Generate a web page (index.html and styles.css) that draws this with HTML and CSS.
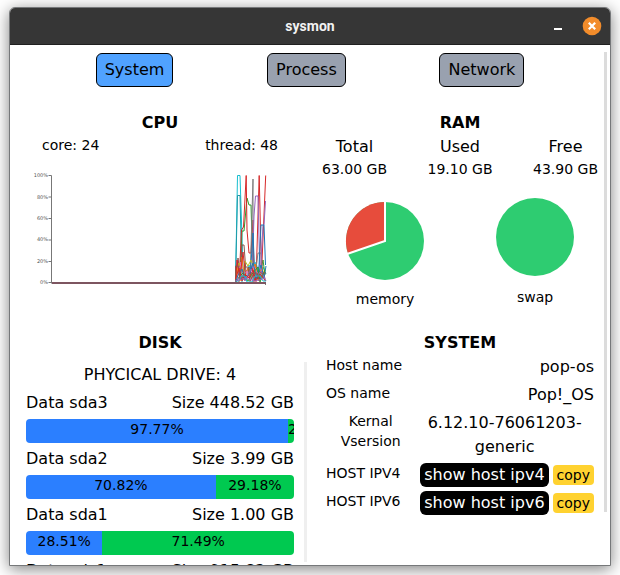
FILE: index.html
```html
<!DOCTYPE html>
<html lang="en">
<head>
<meta charset="utf-8">
<title>sysmon</title>
<link rel="stylesheet" href="styles.css">
</head>
<body>
<div class="window">
  <header class="titlebar">
    <h1 class="titlebar-name">sysmon</h1>
    <div class="titlebar-controls">
      <button class="win-btn" type="button" aria-label="Minimize"><svg width="20" height="20" viewBox="0 0 20 20"><rect x="6" y="12" width="8" height="2" fill="#fff"/></svg></button>
      <button class="win-btn" type="button" aria-label="Close"><svg width="20" height="20" viewBox="0 0 20 20"><circle cx="10" cy="10" r="9.3" fill="#f28c2b"/><path d="M6.8 6.8l6.4 6.4M13.2 6.800l-6.400 6.400" stroke="#fff" stroke-width="2.2"/></svg></button>
    </div>
  </header>
  <main class="content">
    <nav class="tabs">
      <button class="tab tab-active" type="button">System</button>
      <button class="tab" type="button">Process</button>
      <button class="tab" type="button">Network</button>
    </nav>
    <div class="panels">
      <section class="panel">
        <h2 class="panel-title">CPU</h2>
        <div class="cpu-info"><span>core: 24</span><span>thread: 48</span></div>
        <svg class="cpu-chart" viewBox="0 0 268 120" role="img" aria-label="CPU usage">
          <g class="axis-labels">
            <text x="22" y="7">100%</text><text x="22" y="29">80%</text><text x="22" y="50">60%</text><text x="22" y="71">40%</text><text x="22" y="93">20%</text><text x="22" y="114">0%</text>
          </g>
          <path class="axis" d="M22.500 5.500h3v108M22.500 27h3M22.500 48.500h3M22.500 70h3M22.500 91.500h3M22.500 112.500h3M239.500 113v2"/>
          <g class="lines">
            <path stroke="#17becf" d="M209.500 112L211.500 5.500H214L217 98L220 110L223 95L226 108L230 92L234 110L237 97L240 104"/>
            <path stroke="#1f9aa8" d="M209.500 112L211.500 25.500H214L216 112"/>
            <path stroke="#2ca02c" d="M214 106L216 61H218L221 28L223 35H225L227 104L230 94L233 109L237 90L239 105"/>
            <path stroke="#d62728" d="M213 112L215.500 60L217.500 57L220.200 5.500L221 60L223 83H225L227 50L228 112M230 112L233.200 5.500L235.500 103L239.700 5.500"/>
            <path stroke="#8c564b" d="M210 110L212 88L214 104L216 75H218L220 102L223 97L224 104L227 92L230 110"/>
            <path stroke="#7f7f7f" d="M224 112L227 9V112M229 106L232 83L235 83L237 109"/>
            <path stroke="#9467bd" d="M226 110L228 46L229.500 26H232L234 109L237 55H238L239.500 31"/>
            <path stroke="#1f77b4" d="M224 109L227 63L229 111L233 96L235 55H238L239.500 95"/>
            <path stroke="#bcbd22" d="M210 110L213 93L217 102L219 91L222 96L225 90L228 98L231 110L236 99L239 109"/>
            <path stroke="#ff7f0e" d="M209.500 112L212 97L214 111L216 87L218 110L222 98L225 109L229 94L232 108L236 97L239 110"/>
            <path stroke="#e377c2" d="M209.500 112L213 102L215 92L218 109L221 101L224 110L228 96L231 104L235 98L239 111"/>
            <path stroke="#d62728" d="M209.500 112L211 90L214 108L217 82L220 110L226 98L229 111L233 101L239 106"/>
            <path stroke="#1f77b4" d="M209.500 113L212 105L216 99L219 110L224 102L227 93L231 109L235 95L238 108L240 96"/>
            <path stroke="#2ca02c" d="M209.500 113L213 107L217 103L222 111L226 104L232 97L234 112L239 100"/>
            <path stroke="#9467bd" d="M209.500 112L215 105L219 111L225 99L230 107L235 101L240 111"/>
            <path stroke="#8c564b" d="M209.500 112V96H212L214 109H216L219 97H222L224 111L228 103H231L233 111L237 103H240"/>
            <path stroke="#d62728" d="M209.500 109L213 98L216 111L219 104L223 108L227 100L230 111L234 104L239.500 111"/>
            <path stroke="#17becf" d="M209.500 111H213L215 106H219L221 112H226L229 106H234L237 111H240"/>
            <path stroke="#9467bd" d="M209.500 111L219 108L229 111L239.500 108"/>
          </g>
          <path class="baseline" d="M26 113H240"/>
        </svg>
      </section>
      <section class="panel">
        <h2 class="panel-title">RAM</h2>
        <dl class="ram-info">
          <div class="ram-item"><dt>Total</dt><dd>63.00 GB</dd></div>
          <div class="ram-item"><dt>Used</dt><dd>19.10 GB</dd></div>
          <div class="ram-item"><dt>Free</dt><dd>43.90 GB</dd></div>
        </dl>
        <div class="pies">
          <figure class="pie">
            <svg width="80" height="88" viewBox="0 0 80 88"><circle cx="40" cy="44" r="39" fill="#2ecc71"/><path d="M40 44V5A39 39 0 0 0 3 56.500Z" fill="#e74c3c"/><path d="M40 4V44L2 57" fill="none" stroke="#fff" stroke-width="2"/></svg>
            <figcaption>memory</figcaption>
          </figure>
          <figure class="pie">
            <svg width="80" height="86" viewBox="0 0 80 86"><circle cx="40" cy="40" r="39" fill="#2ecc71"/></svg>
            <figcaption>swap</figcaption>
          </figure>
        </div>
      </section>
      <section class="panel disk-panel">
        <h2 class="panel-title">DISK</h2>
        <div class="disk-list">
          <p class="disk-count">PHYCICAL DRIVE: 4</p>
          <div class="disk-head"><span>Data sda3</span><span>Size 448.52 GB</span></div>
          <div class="bar"><span class="used" style="width:97.77%">97.77%</span><span class="free">2.23%</span></div>
          <div class="disk-head"><span>Data sda2</span><span>Size 3.99 GB</span></div>
          <div class="bar"><span class="used" style="width:70.82%">70.82%</span><span class="free">29.18%</span></div>
          <div class="disk-head"><span>Data sda1</span><span>Size 1.00 GB</span></div>
          <div class="bar"><span class="used" style="width:28.51%">28.51%</span><span class="free">71.49%</span></div>
          <div class="disk-head"><span>Data sdc1</span><span>Size 915.82 GB</span></div>
        </div>
        <div class="thumb disk-thumb"></div>
      </section>
      <section class="panel">
        <h2 class="panel-title">SYSTEM</h2>
        <dl class="system-info">
          <div class="row"><dt>Host name</dt><dd>pop-os</dd></div>
          <div class="row"><dt>OS name</dt><dd>Pop!_OS</dd></div>
          <div class="row row-wrapped"><dt>Kernal Vsersion</dt><dd>6.12.10-76061203-generic</dd></div>
          <div class="row"><dt>HOST IPV4</dt><dd class="actions"><button class="show" type="button">show host ipv4</button><button class="copy" type="button">copy</button></dd></div>
          <div class="row"><dt>HOST IPV6</dt><dd class="actions"><button class="show" type="button">show host ipv6</button><button class="copy" type="button">copy</button></dd></div>
        </dl>
      </section>
    </div>
    <div class="thumb page-thumb"></div>
  </main>
</div>
</body>
</html>
```
FILE: styles.css
```css
* {
  box-sizing: border-box;
  margin: 0;
  padding: 0;
}

body {
  height: 100vh;
  padding: 7px 9px 9px;
  overflow: hidden;
  background: #fff;
  color: #000;
  font: 16px/24px "DejaVu Sans", sans-serif;
}

button {
  border: 0;
  font: inherit;
  color: inherit;
  cursor: pointer;
}

svg {
  display: block;
}

.window {
  display: flex;
  flex-direction: column;
  height: 100%;
  border: 1px solid #76787a;
  border-radius: 6px 6px 0 0;
  overflow: hidden;
  background: #fff;
  box-shadow: 0 3px 16px rgba(0, 0, 0, 0.5);
}

.titlebar {
  display: grid;
  grid-template-columns: 1fr auto 1fr;
  align-items: center;
  flex: none;
  height: 37px;
  padding-right: 8px;
  border-bottom: 1px solid #202020;
  background: #363636;
  color: #f2f2f2;
}

.titlebar-name {
  grid-column: 2;
  padding-left: 8px;
  font: 700 14px/20px Roboto, sans-serif;
}

.titlebar-controls {
  display: flex;
  justify-content: flex-end;
  gap: 14px;
}

.win-btn {
  width: 20px;
  height: 20px;
  background: none;
}

.content {
  position: relative;
  display: flex;
  flex-direction: column;
  flex: 1;
  min-height: 0;
}

.tabs {
  display: flex;
  justify-content: space-evenly;
  gap: 8px;
  padding: 8px 0;
}

.tab {
  padding: 4px 8px;
  border: 1px solid #000;
  border-radius: 6px;
  background: #99a1af;
}

.tab-active {
  background: #50a2ff;
}

.panels {
  display: grid;
  grid-template-columns: 1fr 1fr;
  grid-template-rows: 220px minmax(0, 1fr);
  flex: 1;
  min-height: 0;
  padding-top: 16px;
}

.panel {
  min-width: 0;
}

.panel-title {
  font-size: 16px;
  line-height: 24px;
  text-align: center;
}

.cpu-info {
  display: flex;
  justify-content: space-between;
  padding: 0 32px;
  font-size: 14px;
  line-height: 20px;
}

.cpu-chart {
  width: calc(100% - 32px);
  margin: 15px 16px 0;
}

.axis-labels {
  font-size: 5px;
  fill: #555;
  text-anchor: end;
}

.axis {
  fill: none;
  stroke: #777;
}

.lines {
  fill: none;
  stroke-width: 1;
}

.baseline {
  stroke: #7d5560;
  stroke-width: 2;
}

.ram-info {
  display: flex;
  justify-content: space-between;
  padding: 0 12px;
  text-align: center;
}

.ram-item dd {
  font-size: 14px;
  line-height: 20px;
}

.pies {
  display: grid;
  grid-template-columns: 1fr 1fr;
  padding-top: 18px;
}

.pie {
  display: flex;
  flex-direction: column;
  align-items: center;
  gap: 4px;
  font-size: 14px;
  line-height: 20px;
}

.disk-panel {
  position: relative;
  display: flex;
  flex-direction: column;
  min-height: 0;
}

.disk-list {
  display: flex;
  flex-direction: column;
  flex: 1;
  gap: 4px;
  min-height: 0;
  padding: 8px 16px 0;
  overflow: hidden;
}

.disk-list > * {
  flex: none;
}

.disk-count {
  text-align: center;
}

.disk-head {
  display: flex;
  justify-content: space-between;
}

.bar {
  display: flex;
  height: 24px;
  border-radius: 4px;
  overflow: hidden;
  font-size: 14px;
  line-height: 20px;
  text-align: center;
}

.used {
  flex: none;
  background: #2b7fff;
}

.free {
  flex: 1;
  min-width: 0;
  background: #00c950;
}

.system-info {
  display: flex;
  flex-direction: column;
  gap: 4px;
  padding: 0 16px;
}

.row {
  display: flex;
  justify-content: space-between;
}

.row dt {
  font-size: 14px;
  line-height: 20px;
}

.row-wrapped {
  display: grid;
  grid-template-columns: 1fr 2fr;
  text-align: center;
}

.actions {
  display: flex;
  align-items: center;
  gap: 4px;
}

.show {
  padding: 0 4px;
  border-radius: 6px;
  background: #000;
  color: #fff;
}

.copy {
  padding: 0 4px;
  border-radius: 4px;
  background: #ffd230;
  font-size: 14px;
  line-height: 20px;
}

.thumb {
  position: absolute;
  width: 3px;
}

.disk-thumb {
  top: 31px;
  right: 3px;
  bottom: 3px;
  background: #efefef;
}

.page-thumb {
  top: 7px;
  right: 3px;
  bottom: 53px;
  background: #dcdcdc;
}
```
